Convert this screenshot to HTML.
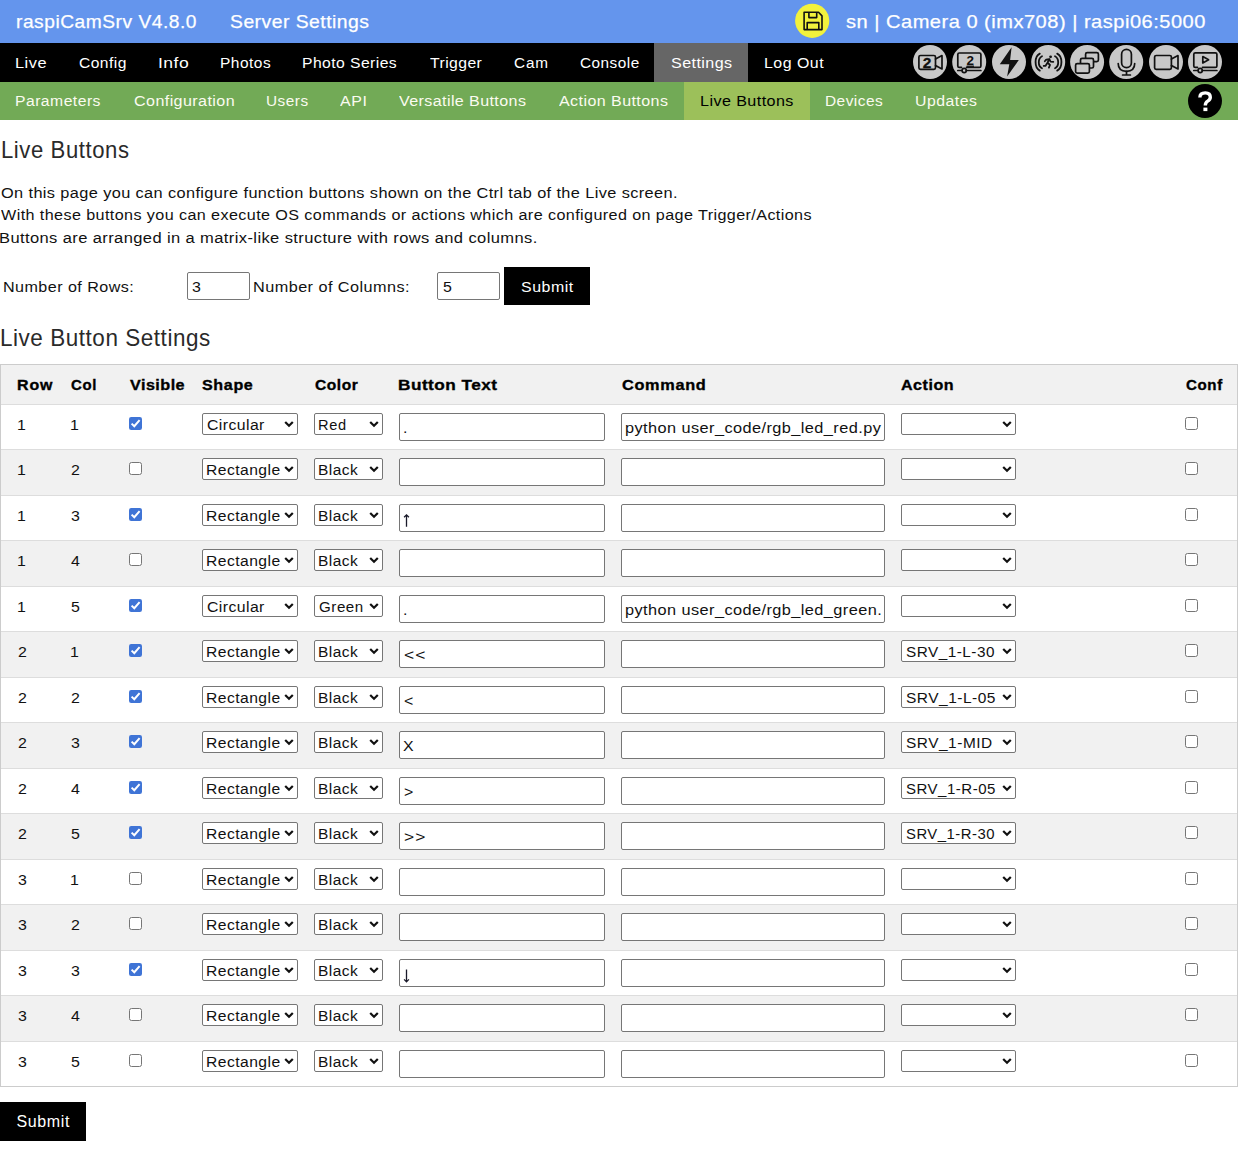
<!DOCTYPE html>
<html><head><meta charset="utf-8"><title>raspiCamSrv</title>
<style>
html,body{margin:0;padding:0;background:#fff;width:1238px;height:1157px;overflow:hidden;position:relative}
body{font-family:'Liberation Sans', sans-serif}
.b{position:absolute}
.t{position:absolute;white-space:nowrap;font-family:'Liberation Sans', sans-serif}
</style></head><body>
<div class=b style="left:0px;top:0px;width:1238px;height:43px;background:#6495ed"></div><div class=b style="left:0px;top:43px;width:1238px;height:39px;background:#000"></div><div class=b style="left:654px;top:43px;width:94px;height:39px;background:#666"></div><div class=b style="left:0px;top:82px;width:1238px;height:38px;background:#72aa56"></div><div class=b style="left:684px;top:82px;width:126px;height:38px;background:#9cc05a"></div><div class=b style="left:0px;top:364px;width:1238px;height:723px;border:1px solid #ccc;box-sizing:border-box;background:#fff"></div><div class=b style="left:1px;top:365px;width:1236px;height:39px;background:#f1f1f1"></div><div class=b style="left:1px;top:404px;width:1236px;height:1px;background:#ddd"></div><div class=b style="left:1px;top:449px;width:1236px;height:46px;background:#f1f1f1"></div><div class=b style="left:1px;top:449px;width:1236px;height:1px;background:#ddd"></div><div class=b style="left:1px;top:495px;width:1236px;height:1px;background:#ddd"></div><div class=b style="left:1px;top:540px;width:1236px;height:46px;background:#f1f1f1"></div><div class=b style="left:1px;top:540px;width:1236px;height:1px;background:#ddd"></div><div class=b style="left:1px;top:586px;width:1236px;height:1px;background:#ddd"></div><div class=b style="left:1px;top:631px;width:1236px;height:46px;background:#f1f1f1"></div><div class=b style="left:1px;top:631px;width:1236px;height:1px;background:#ddd"></div><div class=b style="left:1px;top:677px;width:1236px;height:1px;background:#ddd"></div><div class=b style="left:1px;top:722px;width:1236px;height:46px;background:#f1f1f1"></div><div class=b style="left:1px;top:722px;width:1236px;height:1px;background:#ddd"></div><div class=b style="left:1px;top:768px;width:1236px;height:1px;background:#ddd"></div><div class=b style="left:1px;top:813px;width:1236px;height:46px;background:#f1f1f1"></div><div class=b style="left:1px;top:813px;width:1236px;height:1px;background:#ddd"></div><div class=b style="left:1px;top:859px;width:1236px;height:1px;background:#ddd"></div><div class=b style="left:1px;top:904px;width:1236px;height:46px;background:#f1f1f1"></div><div class=b style="left:1px;top:904px;width:1236px;height:1px;background:#ddd"></div><div class=b style="left:1px;top:950px;width:1236px;height:1px;background:#ddd"></div><div class=b style="left:1px;top:995px;width:1236px;height:46px;background:#f1f1f1"></div><div class=b style="left:1px;top:995px;width:1236px;height:1px;background:#ddd"></div><div class=b style="left:1px;top:1041px;width:1236px;height:1px;background:#ddd"></div><div class=b style="left:187px;top:272.00px;width:63px;height:28px;border:1px solid #767676;border-radius:2px;box-sizing:border-box;background:#fff"></div><div class=b style="left:437px;top:272.00px;width:63px;height:28px;border:1px solid #767676;border-radius:2px;box-sizing:border-box;background:#fff"></div><div class=b style="left:504px;top:267px;width:86px;height:38px;background:#000"></div><div class=b style="left:0px;top:1102px;width:86px;height:39px;background:#000"></div><svg class=b style="left:129px;top:417.00px" width=13 height=13 viewBox="0 0 13 13"><rect x="0" y="0" width="13" height="13" rx="2.2" fill="#3f74d6"/><path d="M2.6 6.6 L5.3 9.2 L10.6 3.2" fill="none" stroke="#fff" stroke-width="2"/></svg><div class=b style="left:202px;top:413.00px;width:96px;height:22px;border:1px solid #767676;border-radius:2px;box-sizing:border-box;background:#fff"></div><svg class=b style="left:284px;top:419.50px;z-index:7" width="10" height="8" viewBox="0 0 10 8"><path d="M1.2 2 L5 5.8 L8.8 2" fill="none" stroke="#111" stroke-width="2.2"/></svg><div class=b style="left:314px;top:413.00px;width:69px;height:22px;border:1px solid #767676;border-radius:2px;box-sizing:border-box;background:#fff"></div><svg class=b style="left:368.7px;top:419.50px;z-index:7" width="10" height="8" viewBox="0 0 10 8"><path d="M1.2 2 L5 5.8 L8.8 2" fill="none" stroke="#111" stroke-width="2.2"/></svg><div class=b style="left:399px;top:413.00px;width:206px;height:28px;border:1px solid #767676;border-radius:2px;box-sizing:border-box;background:#fff"></div><div class=b style="left:621px;top:413.00px;width:264px;height:28px;border:1px solid #767676;border-radius:2px;box-sizing:border-box;background:#fff"></div><div class=b style="left:901px;top:413.00px;width:115px;height:22px;border:1px solid #767676;border-radius:2px;box-sizing:border-box;background:#fff"></div><svg class=b style="left:1002px;top:419.50px;z-index:7" width="10" height="8" viewBox="0 0 10 8"><path d="M1.2 2 L5 5.8 L8.8 2" fill="none" stroke="#111" stroke-width="2.2"/></svg><svg class=b style="left:1185px;top:417.00px" width=13 height=13 viewBox="0 0 13 13"><rect x="0.5" y="0.5" width="12" height="12" rx="2" fill="#fff" stroke="#767676" stroke-width="1"/></svg><svg class=b style="left:129px;top:462.00px" width=13 height=13 viewBox="0 0 13 13"><rect x="0.5" y="0.5" width="12" height="12" rx="2" fill="#fff" stroke="#767676" stroke-width="1"/></svg><div class=b style="left:202px;top:458.00px;width:96px;height:22px;border:1px solid #767676;border-radius:2px;box-sizing:border-box;background:#fff"></div><svg class=b style="left:284px;top:464.50px;z-index:7" width="10" height="8" viewBox="0 0 10 8"><path d="M1.2 2 L5 5.8 L8.8 2" fill="none" stroke="#111" stroke-width="2.2"/></svg><div class=b style="left:314px;top:458.00px;width:69px;height:22px;border:1px solid #767676;border-radius:2px;box-sizing:border-box;background:#fff"></div><svg class=b style="left:368.7px;top:464.50px;z-index:7" width="10" height="8" viewBox="0 0 10 8"><path d="M1.2 2 L5 5.8 L8.8 2" fill="none" stroke="#111" stroke-width="2.2"/></svg><div class=b style="left:399px;top:458.00px;width:206px;height:28px;border:1px solid #767676;border-radius:2px;box-sizing:border-box;background:#fff"></div><div class=b style="left:621px;top:458.00px;width:264px;height:28px;border:1px solid #767676;border-radius:2px;box-sizing:border-box;background:#fff"></div><div class=b style="left:901px;top:458.00px;width:115px;height:22px;border:1px solid #767676;border-radius:2px;box-sizing:border-box;background:#fff"></div><svg class=b style="left:1002px;top:464.50px;z-index:7" width="10" height="8" viewBox="0 0 10 8"><path d="M1.2 2 L5 5.8 L8.8 2" fill="none" stroke="#111" stroke-width="2.2"/></svg><svg class=b style="left:1185px;top:462.00px" width=13 height=13 viewBox="0 0 13 13"><rect x="0.5" y="0.5" width="12" height="12" rx="2" fill="#fff" stroke="#767676" stroke-width="1"/></svg><svg class=b style="left:129px;top:508.00px" width=13 height=13 viewBox="0 0 13 13"><rect x="0" y="0" width="13" height="13" rx="2.2" fill="#3f74d6"/><path d="M2.6 6.6 L5.3 9.2 L10.6 3.2" fill="none" stroke="#fff" stroke-width="2"/></svg><div class=b style="left:202px;top:504.00px;width:96px;height:22px;border:1px solid #767676;border-radius:2px;box-sizing:border-box;background:#fff"></div><svg class=b style="left:284px;top:510.50px;z-index:7" width="10" height="8" viewBox="0 0 10 8"><path d="M1.2 2 L5 5.8 L8.8 2" fill="none" stroke="#111" stroke-width="2.2"/></svg><div class=b style="left:314px;top:504.00px;width:69px;height:22px;border:1px solid #767676;border-radius:2px;box-sizing:border-box;background:#fff"></div><svg class=b style="left:368.7px;top:510.50px;z-index:7" width="10" height="8" viewBox="0 0 10 8"><path d="M1.2 2 L5 5.8 L8.8 2" fill="none" stroke="#111" stroke-width="2.2"/></svg><div class=b style="left:399px;top:504.00px;width:206px;height:28px;border:1px solid #767676;border-radius:2px;box-sizing:border-box;background:#fff"></div><div class=b style="left:621px;top:504.00px;width:264px;height:28px;border:1px solid #767676;border-radius:2px;box-sizing:border-box;background:#fff"></div><div class=b style="left:901px;top:504.00px;width:115px;height:22px;border:1px solid #767676;border-radius:2px;box-sizing:border-box;background:#fff"></div><svg class=b style="left:1002px;top:510.50px;z-index:7" width="10" height="8" viewBox="0 0 10 8"><path d="M1.2 2 L5 5.8 L8.8 2" fill="none" stroke="#111" stroke-width="2.2"/></svg><svg class=b style="left:1185px;top:508.00px" width=13 height=13 viewBox="0 0 13 13"><rect x="0.5" y="0.5" width="12" height="12" rx="2" fill="#fff" stroke="#767676" stroke-width="1"/></svg><svg class=b style="left:400px;top:512.00px;z-index:7" width="12" height="18" viewBox="0 0 12 18"><path d="M6.5 2.8 V14.8 M4.1 5.2 L6.5 2.8 L8.9 5.2" fill="none" stroke="#1a1a2a" stroke-width="1.3"/></svg><svg class=b style="left:129px;top:553.00px" width=13 height=13 viewBox="0 0 13 13"><rect x="0.5" y="0.5" width="12" height="12" rx="2" fill="#fff" stroke="#767676" stroke-width="1"/></svg><div class=b style="left:202px;top:549.00px;width:96px;height:22px;border:1px solid #767676;border-radius:2px;box-sizing:border-box;background:#fff"></div><svg class=b style="left:284px;top:555.50px;z-index:7" width="10" height="8" viewBox="0 0 10 8"><path d="M1.2 2 L5 5.8 L8.8 2" fill="none" stroke="#111" stroke-width="2.2"/></svg><div class=b style="left:314px;top:549.00px;width:69px;height:22px;border:1px solid #767676;border-radius:2px;box-sizing:border-box;background:#fff"></div><svg class=b style="left:368.7px;top:555.50px;z-index:7" width="10" height="8" viewBox="0 0 10 8"><path d="M1.2 2 L5 5.8 L8.8 2" fill="none" stroke="#111" stroke-width="2.2"/></svg><div class=b style="left:399px;top:549.00px;width:206px;height:28px;border:1px solid #767676;border-radius:2px;box-sizing:border-box;background:#fff"></div><div class=b style="left:621px;top:549.00px;width:264px;height:28px;border:1px solid #767676;border-radius:2px;box-sizing:border-box;background:#fff"></div><div class=b style="left:901px;top:549.00px;width:115px;height:22px;border:1px solid #767676;border-radius:2px;box-sizing:border-box;background:#fff"></div><svg class=b style="left:1002px;top:555.50px;z-index:7" width="10" height="8" viewBox="0 0 10 8"><path d="M1.2 2 L5 5.8 L8.8 2" fill="none" stroke="#111" stroke-width="2.2"/></svg><svg class=b style="left:1185px;top:553.00px" width=13 height=13 viewBox="0 0 13 13"><rect x="0.5" y="0.5" width="12" height="12" rx="2" fill="#fff" stroke="#767676" stroke-width="1"/></svg><svg class=b style="left:129px;top:599.00px" width=13 height=13 viewBox="0 0 13 13"><rect x="0" y="0" width="13" height="13" rx="2.2" fill="#3f74d6"/><path d="M2.6 6.6 L5.3 9.2 L10.6 3.2" fill="none" stroke="#fff" stroke-width="2"/></svg><div class=b style="left:202px;top:595.00px;width:96px;height:22px;border:1px solid #767676;border-radius:2px;box-sizing:border-box;background:#fff"></div><svg class=b style="left:284px;top:601.50px;z-index:7" width="10" height="8" viewBox="0 0 10 8"><path d="M1.2 2 L5 5.8 L8.8 2" fill="none" stroke="#111" stroke-width="2.2"/></svg><div class=b style="left:314px;top:595.00px;width:69px;height:22px;border:1px solid #767676;border-radius:2px;box-sizing:border-box;background:#fff"></div><svg class=b style="left:368.7px;top:601.50px;z-index:7" width="10" height="8" viewBox="0 0 10 8"><path d="M1.2 2 L5 5.8 L8.8 2" fill="none" stroke="#111" stroke-width="2.2"/></svg><div class=b style="left:399px;top:595.00px;width:206px;height:28px;border:1px solid #767676;border-radius:2px;box-sizing:border-box;background:#fff"></div><div class=b style="left:621px;top:595.00px;width:264px;height:28px;border:1px solid #767676;border-radius:2px;box-sizing:border-box;background:#fff"></div><div class=b style="left:901px;top:595.00px;width:115px;height:22px;border:1px solid #767676;border-radius:2px;box-sizing:border-box;background:#fff"></div><svg class=b style="left:1002px;top:601.50px;z-index:7" width="10" height="8" viewBox="0 0 10 8"><path d="M1.2 2 L5 5.8 L8.8 2" fill="none" stroke="#111" stroke-width="2.2"/></svg><svg class=b style="left:1185px;top:599.00px" width=13 height=13 viewBox="0 0 13 13"><rect x="0.5" y="0.5" width="12" height="12" rx="2" fill="#fff" stroke="#767676" stroke-width="1"/></svg><svg class=b style="left:129px;top:644.00px" width=13 height=13 viewBox="0 0 13 13"><rect x="0" y="0" width="13" height="13" rx="2.2" fill="#3f74d6"/><path d="M2.6 6.6 L5.3 9.2 L10.6 3.2" fill="none" stroke="#fff" stroke-width="2"/></svg><div class=b style="left:202px;top:640.00px;width:96px;height:22px;border:1px solid #767676;border-radius:2px;box-sizing:border-box;background:#fff"></div><svg class=b style="left:284px;top:646.50px;z-index:7" width="10" height="8" viewBox="0 0 10 8"><path d="M1.2 2 L5 5.8 L8.8 2" fill="none" stroke="#111" stroke-width="2.2"/></svg><div class=b style="left:314px;top:640.00px;width:69px;height:22px;border:1px solid #767676;border-radius:2px;box-sizing:border-box;background:#fff"></div><svg class=b style="left:368.7px;top:646.50px;z-index:7" width="10" height="8" viewBox="0 0 10 8"><path d="M1.2 2 L5 5.8 L8.8 2" fill="none" stroke="#111" stroke-width="2.2"/></svg><div class=b style="left:399px;top:640.00px;width:206px;height:28px;border:1px solid #767676;border-radius:2px;box-sizing:border-box;background:#fff"></div><div class=b style="left:621px;top:640.00px;width:264px;height:28px;border:1px solid #767676;border-radius:2px;box-sizing:border-box;background:#fff"></div><div class=b style="left:901px;top:640.00px;width:115px;height:22px;border:1px solid #767676;border-radius:2px;box-sizing:border-box;background:#fff"></div><svg class=b style="left:1002px;top:646.50px;z-index:7" width="10" height="8" viewBox="0 0 10 8"><path d="M1.2 2 L5 5.8 L8.8 2" fill="none" stroke="#111" stroke-width="2.2"/></svg><svg class=b style="left:1185px;top:644.00px" width=13 height=13 viewBox="0 0 13 13"><rect x="0.5" y="0.5" width="12" height="12" rx="2" fill="#fff" stroke="#767676" stroke-width="1"/></svg><svg class=b style="left:129px;top:690.00px" width=13 height=13 viewBox="0 0 13 13"><rect x="0" y="0" width="13" height="13" rx="2.2" fill="#3f74d6"/><path d="M2.6 6.6 L5.3 9.2 L10.6 3.2" fill="none" stroke="#fff" stroke-width="2"/></svg><div class=b style="left:202px;top:686.00px;width:96px;height:22px;border:1px solid #767676;border-radius:2px;box-sizing:border-box;background:#fff"></div><svg class=b style="left:284px;top:692.50px;z-index:7" width="10" height="8" viewBox="0 0 10 8"><path d="M1.2 2 L5 5.8 L8.8 2" fill="none" stroke="#111" stroke-width="2.2"/></svg><div class=b style="left:314px;top:686.00px;width:69px;height:22px;border:1px solid #767676;border-radius:2px;box-sizing:border-box;background:#fff"></div><svg class=b style="left:368.7px;top:692.50px;z-index:7" width="10" height="8" viewBox="0 0 10 8"><path d="M1.2 2 L5 5.8 L8.8 2" fill="none" stroke="#111" stroke-width="2.2"/></svg><div class=b style="left:399px;top:686.00px;width:206px;height:28px;border:1px solid #767676;border-radius:2px;box-sizing:border-box;background:#fff"></div><div class=b style="left:621px;top:686.00px;width:264px;height:28px;border:1px solid #767676;border-radius:2px;box-sizing:border-box;background:#fff"></div><div class=b style="left:901px;top:686.00px;width:115px;height:22px;border:1px solid #767676;border-radius:2px;box-sizing:border-box;background:#fff"></div><svg class=b style="left:1002px;top:692.50px;z-index:7" width="10" height="8" viewBox="0 0 10 8"><path d="M1.2 2 L5 5.8 L8.8 2" fill="none" stroke="#111" stroke-width="2.2"/></svg><svg class=b style="left:1185px;top:690.00px" width=13 height=13 viewBox="0 0 13 13"><rect x="0.5" y="0.5" width="12" height="12" rx="2" fill="#fff" stroke="#767676" stroke-width="1"/></svg><svg class=b style="left:129px;top:735.00px" width=13 height=13 viewBox="0 0 13 13"><rect x="0" y="0" width="13" height="13" rx="2.2" fill="#3f74d6"/><path d="M2.6 6.6 L5.3 9.2 L10.6 3.2" fill="none" stroke="#fff" stroke-width="2"/></svg><div class=b style="left:202px;top:731.00px;width:96px;height:22px;border:1px solid #767676;border-radius:2px;box-sizing:border-box;background:#fff"></div><svg class=b style="left:284px;top:737.50px;z-index:7" width="10" height="8" viewBox="0 0 10 8"><path d="M1.2 2 L5 5.8 L8.8 2" fill="none" stroke="#111" stroke-width="2.2"/></svg><div class=b style="left:314px;top:731.00px;width:69px;height:22px;border:1px solid #767676;border-radius:2px;box-sizing:border-box;background:#fff"></div><svg class=b style="left:368.7px;top:737.50px;z-index:7" width="10" height="8" viewBox="0 0 10 8"><path d="M1.2 2 L5 5.8 L8.8 2" fill="none" stroke="#111" stroke-width="2.2"/></svg><div class=b style="left:399px;top:731.00px;width:206px;height:28px;border:1px solid #767676;border-radius:2px;box-sizing:border-box;background:#fff"></div><div class=b style="left:621px;top:731.00px;width:264px;height:28px;border:1px solid #767676;border-radius:2px;box-sizing:border-box;background:#fff"></div><div class=b style="left:901px;top:731.00px;width:115px;height:22px;border:1px solid #767676;border-radius:2px;box-sizing:border-box;background:#fff"></div><svg class=b style="left:1002px;top:737.50px;z-index:7" width="10" height="8" viewBox="0 0 10 8"><path d="M1.2 2 L5 5.8 L8.8 2" fill="none" stroke="#111" stroke-width="2.2"/></svg><svg class=b style="left:1185px;top:735.00px" width=13 height=13 viewBox="0 0 13 13"><rect x="0.5" y="0.5" width="12" height="12" rx="2" fill="#fff" stroke="#767676" stroke-width="1"/></svg><svg class=b style="left:129px;top:781.00px" width=13 height=13 viewBox="0 0 13 13"><rect x="0" y="0" width="13" height="13" rx="2.2" fill="#3f74d6"/><path d="M2.6 6.6 L5.3 9.2 L10.6 3.2" fill="none" stroke="#fff" stroke-width="2"/></svg><div class=b style="left:202px;top:777.00px;width:96px;height:22px;border:1px solid #767676;border-radius:2px;box-sizing:border-box;background:#fff"></div><svg class=b style="left:284px;top:783.50px;z-index:7" width="10" height="8" viewBox="0 0 10 8"><path d="M1.2 2 L5 5.8 L8.8 2" fill="none" stroke="#111" stroke-width="2.2"/></svg><div class=b style="left:314px;top:777.00px;width:69px;height:22px;border:1px solid #767676;border-radius:2px;box-sizing:border-box;background:#fff"></div><svg class=b style="left:368.7px;top:783.50px;z-index:7" width="10" height="8" viewBox="0 0 10 8"><path d="M1.2 2 L5 5.8 L8.8 2" fill="none" stroke="#111" stroke-width="2.2"/></svg><div class=b style="left:399px;top:777.00px;width:206px;height:28px;border:1px solid #767676;border-radius:2px;box-sizing:border-box;background:#fff"></div><div class=b style="left:621px;top:777.00px;width:264px;height:28px;border:1px solid #767676;border-radius:2px;box-sizing:border-box;background:#fff"></div><div class=b style="left:901px;top:777.00px;width:115px;height:22px;border:1px solid #767676;border-radius:2px;box-sizing:border-box;background:#fff"></div><svg class=b style="left:1002px;top:783.50px;z-index:7" width="10" height="8" viewBox="0 0 10 8"><path d="M1.2 2 L5 5.8 L8.8 2" fill="none" stroke="#111" stroke-width="2.2"/></svg><svg class=b style="left:1185px;top:781.00px" width=13 height=13 viewBox="0 0 13 13"><rect x="0.5" y="0.5" width="12" height="12" rx="2" fill="#fff" stroke="#767676" stroke-width="1"/></svg><svg class=b style="left:129px;top:826.00px" width=13 height=13 viewBox="0 0 13 13"><rect x="0" y="0" width="13" height="13" rx="2.2" fill="#3f74d6"/><path d="M2.6 6.6 L5.3 9.2 L10.6 3.2" fill="none" stroke="#fff" stroke-width="2"/></svg><div class=b style="left:202px;top:822.00px;width:96px;height:22px;border:1px solid #767676;border-radius:2px;box-sizing:border-box;background:#fff"></div><svg class=b style="left:284px;top:828.50px;z-index:7" width="10" height="8" viewBox="0 0 10 8"><path d="M1.2 2 L5 5.8 L8.8 2" fill="none" stroke="#111" stroke-width="2.2"/></svg><div class=b style="left:314px;top:822.00px;width:69px;height:22px;border:1px solid #767676;border-radius:2px;box-sizing:border-box;background:#fff"></div><svg class=b style="left:368.7px;top:828.50px;z-index:7" width="10" height="8" viewBox="0 0 10 8"><path d="M1.2 2 L5 5.8 L8.8 2" fill="none" stroke="#111" stroke-width="2.2"/></svg><div class=b style="left:399px;top:822.00px;width:206px;height:28px;border:1px solid #767676;border-radius:2px;box-sizing:border-box;background:#fff"></div><div class=b style="left:621px;top:822.00px;width:264px;height:28px;border:1px solid #767676;border-radius:2px;box-sizing:border-box;background:#fff"></div><div class=b style="left:901px;top:822.00px;width:115px;height:22px;border:1px solid #767676;border-radius:2px;box-sizing:border-box;background:#fff"></div><svg class=b style="left:1002px;top:828.50px;z-index:7" width="10" height="8" viewBox="0 0 10 8"><path d="M1.2 2 L5 5.8 L8.8 2" fill="none" stroke="#111" stroke-width="2.2"/></svg><svg class=b style="left:1185px;top:826.00px" width=13 height=13 viewBox="0 0 13 13"><rect x="0.5" y="0.5" width="12" height="12" rx="2" fill="#fff" stroke="#767676" stroke-width="1"/></svg><svg class=b style="left:129px;top:872.00px" width=13 height=13 viewBox="0 0 13 13"><rect x="0.5" y="0.5" width="12" height="12" rx="2" fill="#fff" stroke="#767676" stroke-width="1"/></svg><div class=b style="left:202px;top:868.00px;width:96px;height:22px;border:1px solid #767676;border-radius:2px;box-sizing:border-box;background:#fff"></div><svg class=b style="left:284px;top:874.50px;z-index:7" width="10" height="8" viewBox="0 0 10 8"><path d="M1.2 2 L5 5.8 L8.8 2" fill="none" stroke="#111" stroke-width="2.2"/></svg><div class=b style="left:314px;top:868.00px;width:69px;height:22px;border:1px solid #767676;border-radius:2px;box-sizing:border-box;background:#fff"></div><svg class=b style="left:368.7px;top:874.50px;z-index:7" width="10" height="8" viewBox="0 0 10 8"><path d="M1.2 2 L5 5.8 L8.8 2" fill="none" stroke="#111" stroke-width="2.2"/></svg><div class=b style="left:399px;top:868.00px;width:206px;height:28px;border:1px solid #767676;border-radius:2px;box-sizing:border-box;background:#fff"></div><div class=b style="left:621px;top:868.00px;width:264px;height:28px;border:1px solid #767676;border-radius:2px;box-sizing:border-box;background:#fff"></div><div class=b style="left:901px;top:868.00px;width:115px;height:22px;border:1px solid #767676;border-radius:2px;box-sizing:border-box;background:#fff"></div><svg class=b style="left:1002px;top:874.50px;z-index:7" width="10" height="8" viewBox="0 0 10 8"><path d="M1.2 2 L5 5.8 L8.8 2" fill="none" stroke="#111" stroke-width="2.2"/></svg><svg class=b style="left:1185px;top:872.00px" width=13 height=13 viewBox="0 0 13 13"><rect x="0.5" y="0.5" width="12" height="12" rx="2" fill="#fff" stroke="#767676" stroke-width="1"/></svg><svg class=b style="left:129px;top:917.00px" width=13 height=13 viewBox="0 0 13 13"><rect x="0.5" y="0.5" width="12" height="12" rx="2" fill="#fff" stroke="#767676" stroke-width="1"/></svg><div class=b style="left:202px;top:913.00px;width:96px;height:22px;border:1px solid #767676;border-radius:2px;box-sizing:border-box;background:#fff"></div><svg class=b style="left:284px;top:919.50px;z-index:7" width="10" height="8" viewBox="0 0 10 8"><path d="M1.2 2 L5 5.8 L8.8 2" fill="none" stroke="#111" stroke-width="2.2"/></svg><div class=b style="left:314px;top:913.00px;width:69px;height:22px;border:1px solid #767676;border-radius:2px;box-sizing:border-box;background:#fff"></div><svg class=b style="left:368.7px;top:919.50px;z-index:7" width="10" height="8" viewBox="0 0 10 8"><path d="M1.2 2 L5 5.8 L8.8 2" fill="none" stroke="#111" stroke-width="2.2"/></svg><div class=b style="left:399px;top:913.00px;width:206px;height:28px;border:1px solid #767676;border-radius:2px;box-sizing:border-box;background:#fff"></div><div class=b style="left:621px;top:913.00px;width:264px;height:28px;border:1px solid #767676;border-radius:2px;box-sizing:border-box;background:#fff"></div><div class=b style="left:901px;top:913.00px;width:115px;height:22px;border:1px solid #767676;border-radius:2px;box-sizing:border-box;background:#fff"></div><svg class=b style="left:1002px;top:919.50px;z-index:7" width="10" height="8" viewBox="0 0 10 8"><path d="M1.2 2 L5 5.8 L8.8 2" fill="none" stroke="#111" stroke-width="2.2"/></svg><svg class=b style="left:1185px;top:917.00px" width=13 height=13 viewBox="0 0 13 13"><rect x="0.5" y="0.5" width="12" height="12" rx="2" fill="#fff" stroke="#767676" stroke-width="1"/></svg><svg class=b style="left:129px;top:963.00px" width=13 height=13 viewBox="0 0 13 13"><rect x="0" y="0" width="13" height="13" rx="2.2" fill="#3f74d6"/><path d="M2.6 6.6 L5.3 9.2 L10.6 3.2" fill="none" stroke="#fff" stroke-width="2"/></svg><div class=b style="left:202px;top:959.00px;width:96px;height:22px;border:1px solid #767676;border-radius:2px;box-sizing:border-box;background:#fff"></div><svg class=b style="left:284px;top:965.50px;z-index:7" width="10" height="8" viewBox="0 0 10 8"><path d="M1.2 2 L5 5.8 L8.8 2" fill="none" stroke="#111" stroke-width="2.2"/></svg><div class=b style="left:314px;top:959.00px;width:69px;height:22px;border:1px solid #767676;border-radius:2px;box-sizing:border-box;background:#fff"></div><svg class=b style="left:368.7px;top:965.50px;z-index:7" width="10" height="8" viewBox="0 0 10 8"><path d="M1.2 2 L5 5.8 L8.8 2" fill="none" stroke="#111" stroke-width="2.2"/></svg><div class=b style="left:399px;top:959.00px;width:206px;height:28px;border:1px solid #767676;border-radius:2px;box-sizing:border-box;background:#fff"></div><div class=b style="left:621px;top:959.00px;width:264px;height:28px;border:1px solid #767676;border-radius:2px;box-sizing:border-box;background:#fff"></div><div class=b style="left:901px;top:959.00px;width:115px;height:22px;border:1px solid #767676;border-radius:2px;box-sizing:border-box;background:#fff"></div><svg class=b style="left:1002px;top:965.50px;z-index:7" width="10" height="8" viewBox="0 0 10 8"><path d="M1.2 2 L5 5.8 L8.8 2" fill="none" stroke="#111" stroke-width="2.2"/></svg><svg class=b style="left:1185px;top:963.00px" width=13 height=13 viewBox="0 0 13 13"><rect x="0.5" y="0.5" width="12" height="12" rx="2" fill="#fff" stroke="#767676" stroke-width="1"/></svg><svg class=b style="left:400px;top:967.00px;z-index:7" width="12" height="18" viewBox="0 0 12 18"><path d="M6.5 2.4 V14.9 M4.1 12.4 L6.5 14.9 L8.9 12.4" fill="none" stroke="#1a1a2a" stroke-width="1.3"/></svg><svg class=b style="left:129px;top:1008.00px" width=13 height=13 viewBox="0 0 13 13"><rect x="0.5" y="0.5" width="12" height="12" rx="2" fill="#fff" stroke="#767676" stroke-width="1"/></svg><div class=b style="left:202px;top:1004.00px;width:96px;height:22px;border:1px solid #767676;border-radius:2px;box-sizing:border-box;background:#fff"></div><svg class=b style="left:284px;top:1010.50px;z-index:7" width="10" height="8" viewBox="0 0 10 8"><path d="M1.2 2 L5 5.8 L8.8 2" fill="none" stroke="#111" stroke-width="2.2"/></svg><div class=b style="left:314px;top:1004.00px;width:69px;height:22px;border:1px solid #767676;border-radius:2px;box-sizing:border-box;background:#fff"></div><svg class=b style="left:368.7px;top:1010.50px;z-index:7" width="10" height="8" viewBox="0 0 10 8"><path d="M1.2 2 L5 5.8 L8.8 2" fill="none" stroke="#111" stroke-width="2.2"/></svg><div class=b style="left:399px;top:1004.00px;width:206px;height:28px;border:1px solid #767676;border-radius:2px;box-sizing:border-box;background:#fff"></div><div class=b style="left:621px;top:1004.00px;width:264px;height:28px;border:1px solid #767676;border-radius:2px;box-sizing:border-box;background:#fff"></div><div class=b style="left:901px;top:1004.00px;width:115px;height:22px;border:1px solid #767676;border-radius:2px;box-sizing:border-box;background:#fff"></div><svg class=b style="left:1002px;top:1010.50px;z-index:7" width="10" height="8" viewBox="0 0 10 8"><path d="M1.2 2 L5 5.8 L8.8 2" fill="none" stroke="#111" stroke-width="2.2"/></svg><svg class=b style="left:1185px;top:1008.00px" width=13 height=13 viewBox="0 0 13 13"><rect x="0.5" y="0.5" width="12" height="12" rx="2" fill="#fff" stroke="#767676" stroke-width="1"/></svg><svg class=b style="left:129px;top:1054.00px" width=13 height=13 viewBox="0 0 13 13"><rect x="0.5" y="0.5" width="12" height="12" rx="2" fill="#fff" stroke="#767676" stroke-width="1"/></svg><div class=b style="left:202px;top:1050.00px;width:96px;height:22px;border:1px solid #767676;border-radius:2px;box-sizing:border-box;background:#fff"></div><svg class=b style="left:284px;top:1056.50px;z-index:7" width="10" height="8" viewBox="0 0 10 8"><path d="M1.2 2 L5 5.8 L8.8 2" fill="none" stroke="#111" stroke-width="2.2"/></svg><div class=b style="left:314px;top:1050.00px;width:69px;height:22px;border:1px solid #767676;border-radius:2px;box-sizing:border-box;background:#fff"></div><svg class=b style="left:368.7px;top:1056.50px;z-index:7" width="10" height="8" viewBox="0 0 10 8"><path d="M1.2 2 L5 5.8 L8.8 2" fill="none" stroke="#111" stroke-width="2.2"/></svg><div class=b style="left:399px;top:1050.00px;width:206px;height:28px;border:1px solid #767676;border-radius:2px;box-sizing:border-box;background:#fff"></div><div class=b style="left:621px;top:1050.00px;width:264px;height:28px;border:1px solid #767676;border-radius:2px;box-sizing:border-box;background:#fff"></div><div class=b style="left:901px;top:1050.00px;width:115px;height:22px;border:1px solid #767676;border-radius:2px;box-sizing:border-box;background:#fff"></div><svg class=b style="left:1002px;top:1056.50px;z-index:7" width="10" height="8" viewBox="0 0 10 8"><path d="M1.2 2 L5 5.8 L8.8 2" fill="none" stroke="#111" stroke-width="2.2"/></svg><svg class=b style="left:1185px;top:1054.00px" width=13 height=13 viewBox="0 0 13 13"><rect x="0.5" y="0.5" width="12" height="12" rx="2" fill="#fff" stroke="#767676" stroke-width="1"/></svg>
<svg class="b" style="left:0;top:0;z-index:4" width="1238" height="120" viewBox="0 0 1238 120">
<!-- save -->
<circle cx="812.2" cy="20.8" r="17.1" fill="#f2f23c"/>
<g fill="none" stroke="#111" stroke-width="1.6" stroke-linejoin="round">
<path d="M804.1 12.3 H818.5 L822 15.9 V29.6 H804.1 Z"/>
<path d="M808.9 12.3 V17.6 H816.7 V12.3"/>
<path d="M807.2 29.6 V22.6 H818.8 V29.6"/>
</g>
<!-- nav circles -->
<g fill="#c8c8c8">
<circle cx="930" cy="62" r="17"/><circle cx="969.2" cy="62" r="17"/><circle cx="1009" cy="62" r="17"/><circle cx="1048.2" cy="62" r="17"/>
<circle cx="1087.1" cy="62" r="17"/><circle cx="1126.2" cy="62" r="17"/><circle cx="1166" cy="62" r="17"/><circle cx="1205" cy="62" r="17"/>
</g>
<g fill="none" stroke="#111" stroke-width="1.7" stroke-linejoin="round" stroke-linecap="round">
<!-- 1 camera 2 -->
<rect x="918.9" y="55.5" width="16.6" height="13.8" rx="1.6"/>
<path d="M935.5 59 L942 55.6 V69 L935.5 65.6"/>
<!-- 2 monitor 2 -->
<path d="M961.5 67.4 H959.3 Q957.8 67.4 957.8 65.9 V54.5 Q957.8 53 959.3 53 H979.4 Q980.9 53 980.9 54.5 V65.9 Q980.9 67.4 979.4 67.4 H966.5"/>
<path d="M957.8 70.5 H962 M966.3 70.5 H980.9"/>
<circle cx="964.2" cy="70.5" r="2.1"/>
<!-- 4 motion arcs -->
<path d="M1039.8 53.6 A6.3 9 0 0 0 1039.8 70.6" stroke-width="1.8"/>
<path d="M1042 56.2 A5.2 6.5 0 0 0 1042 68.2" stroke-width="1.8"/>
<path d="M1057.2 53.6 A6.3 9 0 0 1 1057.2 70.6" stroke-width="1.8"/>
<path d="M1055 56.2 A5.2 6.5 0 0 1 1055 68.2" stroke-width="1.8"/>
<!-- 5 stacked -->
<rect x="1085.6" y="52.6" width="12.8" height="9" rx="1.6" fill="#c8c8c8"/>
<rect x="1080.5" y="58.4" width="13" height="9.6" rx="1.6" fill="#c8c8c8"/>
<rect x="1075.6" y="63.6" width="13.8" height="9.6" rx="1.6" fill="#c8c8c8"/>
<!-- 6 mic -->
<rect x="1121.6" y="49.3" width="9.8" height="18.4" rx="4.9"/>
<path d="M1118.2 63.6 Q1118.2 71.3 1126.5 71.3 Q1134.7 71.3 1134.7 63.6"/>
<path d="M1126.5 71.3 V75 M1122.6 75 H1130.4"/>
<!-- 7 video -->
<rect x="1154.6" y="55.5" width="16.8" height="13.8" rx="1.6"/>
<path d="M1171.4 59 L1178 55.6 V69 L1171.4 65.6"/>
<!-- 8 monitor play -->
<path d="M1197.5 67.4 H1195.3 Q1193.8 67.4 1193.8 65.9 V54.3 Q1193.8 52.8 1195.3 52.8 H1215.4 Q1216.9 52.8 1216.9 54.3 V65.9 Q1216.9 67.4 1215.4 67.4 H1202.5"/>
<path d="M1193.8 70.5 H1198 M1202.3 70.5 H1216.9"/>
<circle cx="1200.2" cy="70.5" r="2.1"/>
<path d="M1202.8 56.6 V63 L1208.6 59.8 Z"/>
</g>
<!-- digits 2 -->
<text x="927.1" y="68" font-family="Liberation Sans" font-weight="bold" font-size="15.5" text-anchor="middle" fill="#111" stroke="#111" stroke-width="0.3">2</text>
<text x="970.2" y="65.2" font-family="Liberation Sans" font-weight="bold" font-size="13.5" text-anchor="middle" fill="#111">2</text>
<path d="M966.6 66.2 H974" stroke="#111" stroke-width="1.3"/>
<!-- bolt -->
<path d="M1011.6 47.2 L999.8 64.3 H1009.3 L1007.1 76.5 L1018.8 60 H1010.1 Z" fill="#111"/>
<!-- runner -->
<g fill="#111" stroke="#111" stroke-linecap="round" stroke-linejoin="round">
<circle cx="1050.6" cy="56.8" r="1.4" stroke="none"/>
<path d="M1049.3 59.2 L1047 63.6 M1049.3 59.2 L1046.2 59.6 L1044.8 61.3 M1049.3 59.2 L1050.6 61.6 L1053.3 61.9 M1047.6 62.6 L1050 65 L1048.9 67.6 M1047 63.6 L1045.6 65.8 L1043.7 65.9" fill="none" stroke-width="1.8"/>
</g>
<!-- help -->
<circle cx="1205" cy="101" r="17" fill="#000"/>
<path d="M1199.9 97.4 Q1199.9 92.9 1205.3 92.9 Q1210.3 92.9 1210.3 97.2 Q1210.3 99.6 1207.7 101.1 Q1205.3 102.5 1205.3 105.6" fill="none" stroke="#fff" stroke-width="3.4"/>
<rect x="1203.4" y="107.6" width="4.0" height="3.5" fill="#fff"/>
</svg>

<div class=t style="left:15.95px;top:10.38px;transform:scaleX(1.0539);transform-origin:0 0;font-size:18.2px;line-height:24px;letter-spacing:0.500px;font-weight:normal;color:#fff;z-index:5;-webkit-text-stroke:0.25px #fff">raspiCamSrv V4.8.0</div><div class=t style="left:229.90px;top:10.38px;transform:scaleX(1.0621);transform-origin:0 0;font-size:18.2px;line-height:24px;letter-spacing:0.467px;font-weight:normal;color:#fff;z-index:5;-webkit-text-stroke:0.25px #fff">Server Settings</div><div class=t style="left:845.80px;top:10.38px;transform:scaleX(1.1023);transform-origin:0 0;font-size:18.2px;line-height:24px;letter-spacing:0.453px;font-weight:normal;color:#fff;z-index:5;-webkit-text-stroke:0.25px #fff">sn | Camera 0 (imx708) | raspi06:5000</div><div class=t style="left:15.24px;top:52.88px;transform:scaleX(1.0558);transform-origin:0 0;font-size:15.5px;line-height:20px;letter-spacing:0.470px;font-weight:normal;color:#fff;z-index:5;-webkit-text-stroke:0px #fff">Live</div><div class=t style="left:78.70px;top:52.88px;transform:scaleX(1.0062);transform-origin:0 0;font-size:15.5px;line-height:20px;letter-spacing:0.465px;font-weight:normal;color:#fff;z-index:5;-webkit-text-stroke:0px #fff">Config</div><div class=t style="left:157.57px;top:52.88px;transform:scaleX(1.1330);transform-origin:0 0;font-size:15.5px;line-height:20px;letter-spacing:0.425px;font-weight:normal;color:#fff;z-index:5;-webkit-text-stroke:0px #fff">Info</div><div class=t style="left:219.50px;top:52.88px;transform:scaleX(0.9979);transform-origin:0 0;font-size:15.5px;line-height:20px;letter-spacing:0.500px;font-weight:normal;color:#fff;z-index:5;-webkit-text-stroke:0px #fff">Photos</div><div class=t style="left:301.99px;top:52.88px;transform:scaleX(1.0137);transform-origin:0 0;font-size:15.5px;line-height:20px;letter-spacing:0.421px;font-weight:normal;color:#fff;z-index:5;-webkit-text-stroke:0px #fff">Photo Series</div><div class=t style="left:429.50px;top:52.88px;transform:scaleX(1.0156);transform-origin:0 0;font-size:15.5px;line-height:20px;letter-spacing:0.424px;font-weight:normal;color:#fff;z-index:5;-webkit-text-stroke:0px #fff">Trigger</div><div class=t style="left:513.50px;top:52.88px;transform:scaleX(0.9884);transform-origin:0 0;font-size:15.5px;line-height:20px;letter-spacing:0.837px;font-weight:normal;color:#fff;z-index:5;-webkit-text-stroke:0px #fff">Cam</div><div class=t style="left:579.70px;top:52.88px;transform:scaleX(0.9897);transform-origin:0 0;font-size:15.5px;line-height:20px;letter-spacing:0.493px;font-weight:normal;color:#fff;z-index:5;-webkit-text-stroke:0px #fff">Console</div><div class=t style="left:670.60px;top:52.88px;transform:scaleX(1.0369);transform-origin:0 0;font-size:15.5px;line-height:20px;letter-spacing:0.423px;font-weight:normal;color:#fff;z-index:5;-webkit-text-stroke:0px #fff">Settings</div><div class=t style="left:763.67px;top:52.88px;transform:scaleX(1.0272);transform-origin:0 0;font-size:15.5px;line-height:20px;letter-spacing:0.481px;font-weight:normal;color:#fff;z-index:5;-webkit-text-stroke:0px #fff">Log Out</div><div class=t style="left:15.29px;top:91.38px;transform:scaleX(1.0139);transform-origin:0 0;font-size:15.5px;line-height:20px;letter-spacing:0.464px;font-weight:normal;color:#fbfbf0;z-index:5;-webkit-text-stroke:0px #fbfbf0">Parameters</div><div class=t style="left:134.00px;top:91.38px;transform:scaleX(1.0374);transform-origin:0 0;font-size:15.5px;line-height:20px;letter-spacing:0.402px;font-weight:normal;color:#fbfbf0;z-index:5;-webkit-text-stroke:0px #fbfbf0">Configuration</div><div class=t style="left:265.61px;top:91.38px;transform:scaleX(0.9900);transform-origin:0 0;font-size:15.5px;line-height:20px;letter-spacing:0.523px;font-weight:normal;color:#fbfbf0;z-index:5;-webkit-text-stroke:0px #fbfbf0">Users</div><div class=t style="left:340.00px;top:91.38px;transform:scaleX(1.0312);transform-origin:0 0;font-size:15.5px;line-height:20px;letter-spacing:0.623px;font-weight:normal;color:#fbfbf0;z-index:5;-webkit-text-stroke:0px #fbfbf0">API</div><div class=t style="left:398.50px;top:91.38px;transform:scaleX(1.0366);transform-origin:0 0;font-size:15.5px;line-height:20px;letter-spacing:0.383px;font-weight:normal;color:#fbfbf0;z-index:5;-webkit-text-stroke:0px #fbfbf0">Versatile Buttons</div><div class=t style="left:558.80px;top:91.38px;transform:scaleX(1.0354);transform-origin:0 0;font-size:15.5px;line-height:20px;letter-spacing:0.406px;font-weight:normal;color:#fbfbf0;z-index:5;-webkit-text-stroke:0px #fbfbf0">Action Buttons</div><div class=t style="left:699.96px;top:91.38px;transform:scaleX(1.0404);transform-origin:0 0;font-size:15.5px;line-height:20px;letter-spacing:0.405px;font-weight:normal;color:#000;z-index:5;-webkit-text-stroke:0px #000">Live Buttons</div><div class=t style="left:824.70px;top:91.38px;transform:scaleX(0.9958);transform-origin:0 0;font-size:15.5px;line-height:20px;letter-spacing:0.477px;font-weight:normal;color:#fbfbf0;z-index:5;-webkit-text-stroke:0px #fbfbf0">Devices</div><div class=t style="left:914.78px;top:91.38px;transform:scaleX(1.0203);transform-origin:0 0;font-size:15.5px;line-height:20px;letter-spacing:0.500px;font-weight:normal;color:#fbfbf0;z-index:5;-webkit-text-stroke:0px #fbfbf0">Updates</div><div class=t style="left:0.85px;top:135.23px;transform:scaleX(0.9536);transform-origin:0 0;font-size:23.2px;line-height:30px;letter-spacing:0.603px;font-weight:normal;color:#2a2a2a;z-index:5;-webkit-text-stroke:0px #2a2a2a">Live Buttons</div><div class=t style="left:0.50px;top:182.58px;transform:scaleX(1.0536);transform-origin:0 0;font-size:15.5px;line-height:20px;letter-spacing:0.364px;font-weight:normal;color:#111;z-index:5;-webkit-text-stroke:0px #111">On this page you can configure function buttons shown on the Ctrl tab of the Live screen.</div><div class=t style="left:0.50px;top:205.18px;transform:scaleX(1.0417);transform-origin:0 0;font-size:15.5px;line-height:20px;letter-spacing:0.385px;font-weight:normal;color:#111;z-index:5;-webkit-text-stroke:0px #111">With these buttons you can execute OS commands or actions which are configured on page Trigger/Actions</div><div class=t style="left:-0.57px;top:227.58px;transform:scaleX(1.0659);transform-origin:0 0;font-size:15.5px;line-height:20px;letter-spacing:0.364px;font-weight:normal;color:#111;z-index:5;-webkit-text-stroke:0px #111">Buttons are arranged in a matrix-like structure with rows and columns.</div><div class=t style="left:2.86px;top:276.88px;transform:scaleX(1.0388);transform-origin:0 0;font-size:15.5px;line-height:20px;letter-spacing:0.441px;font-weight:normal;color:#111;z-index:5;-webkit-text-stroke:0px #111">Number of Rows:</div><div class=t style="left:253.45px;top:276.88px;transform:scaleX(1.0476);transform-origin:0 0;font-size:15.5px;line-height:20px;letter-spacing:0.433px;font-weight:normal;color:#111;z-index:5;-webkit-text-stroke:0px #111">Number of Columns:</div><div class=t style="left:191.50px;top:277.38px;transform:scaleX(1.0260);transform-origin:0 0;font-size:15.5px;line-height:20px;letter-spacing:0.000px;font-weight:normal;color:#111;z-index:5;-webkit-text-stroke:0px #111">3</div><div class=t style="left:442.70px;top:277.38px;transform:scaleX(1.0260);transform-origin:0 0;font-size:15.5px;line-height:20px;letter-spacing:0.000px;font-weight:normal;color:#111;z-index:5;-webkit-text-stroke:0px #111">5</div><div class=t style="left:520.60px;top:276.88px;transform:scaleX(1.0270);transform-origin:0 0;font-size:15.5px;line-height:20px;letter-spacing:0.515px;font-weight:normal;color:#fff;z-index:5;-webkit-text-stroke:0px #fff">Submit</div><div class=t style="left:0.33px;top:323.33px;transform:scaleX(0.9688);transform-origin:0 0;font-size:23.2px;line-height:30px;letter-spacing:0.567px;font-weight:normal;color:#2a2a2a;z-index:5;-webkit-text-stroke:0px #2a2a2a">Live Button Settings</div><div class=t style="left:16.57px;top:374.58px;transform:scaleX(1.0296);transform-origin:0 0;font-size:15.5px;line-height:20px;letter-spacing:0.860px;font-weight:bold;color:#000;z-index:5;-webkit-text-stroke:0.35px #000">Row</div><div class=t style="left:71.00px;top:374.58px;transform:scaleX(0.9630);transform-origin:0 0;font-size:15.5px;line-height:20px;letter-spacing:0.649px;font-weight:bold;color:#000;z-index:5;-webkit-text-stroke:0.35px #000">Col</div><div class=t style="left:130.00px;top:374.58px;transform:scaleX(1.0436);transform-origin:0 0;font-size:15.5px;line-height:20px;letter-spacing:0.439px;font-weight:bold;color:#000;z-index:5;-webkit-text-stroke:0.35px #000">Visible</div><div class=t style="left:201.60px;top:374.58px;transform:scaleX(1.0372);transform-origin:0 0;font-size:15.5px;line-height:20px;letter-spacing:0.617px;font-weight:bold;color:#000;z-index:5;-webkit-text-stroke:0.35px #000">Shape</div><div class=t style="left:314.50px;top:374.58px;transform:scaleX(1.0032);transform-origin:0 0;font-size:15.5px;line-height:20px;letter-spacing:0.532px;font-weight:bold;color:#000;z-index:5;-webkit-text-stroke:0.35px #000">Color</div><div class=t style="left:398.09px;top:374.58px;transform:scaleX(1.1089);transform-origin:0 0;font-size:15.5px;line-height:20px;letter-spacing:0.441px;font-weight:bold;color:#000;z-index:5;-webkit-text-stroke:0.35px #000">Button Text</div><div class=t style="left:621.70px;top:374.58px;transform:scaleX(1.0507);transform-origin:0 0;font-size:15.5px;line-height:20px;letter-spacing:0.661px;font-weight:bold;color:#000;z-index:5;-webkit-text-stroke:0.35px #000">Command</div><div class=t style="left:901.10px;top:374.58px;transform:scaleX(1.0365);transform-origin:0 0;font-size:15.5px;line-height:20px;letter-spacing:0.503px;font-weight:bold;color:#000;z-index:5;-webkit-text-stroke:0.35px #000">Action</div><div class=t style="left:1185.70px;top:374.58px;transform:scaleX(0.9729);transform-origin:0 0;font-size:15.5px;line-height:20px;letter-spacing:0.634px;font-weight:bold;color:#000;z-index:5;-webkit-text-stroke:0.35px #000">Conf</div><div class=t style="left:16.97px;top:414.88px;transform:scaleX(1.0260);transform-origin:0 0;font-size:15.5px;line-height:20px;letter-spacing:0.000px;font-weight:normal;color:#111;z-index:5;-webkit-text-stroke:0px #111">1</div><div class=t style="left:70.27px;top:414.88px;transform:scaleX(1.0260);transform-origin:0 0;font-size:15.5px;line-height:20px;letter-spacing:0.000px;font-weight:normal;color:#111;z-index:5;-webkit-text-stroke:0px #111">1</div><div class=t style="left:207.30px;top:414.88px;transform:scaleX(1.0208);transform-origin:0 0;font-size:15.5px;line-height:20px;letter-spacing:0.400px;font-weight:normal;color:#111;z-index:5;-webkit-text-stroke:0px #111">Circular</div><div class=t style="left:318.46px;top:414.88px;transform:scaleX(0.9424);transform-origin:0 0;font-size:15.5px;line-height:20px;letter-spacing:0.706px;font-weight:normal;color:#111;z-index:5;-webkit-text-stroke:0px #111">Red</div><div class=t style="left:402.97px;top:417.68px;transform:scaleX(1.0260);transform-origin:0 0;font-size:15.5px;line-height:20px;letter-spacing:0.000px;font-weight:normal;color:#111;z-index:5;-webkit-text-stroke:0px #111">.</div><div class=b style="left:622.5px;top:414.30px;width:259.70000000000005px;height:25.70px;overflow:hidden;z-index:6"><div class=t style="left:2.45px;top:3.38px;transform:scaleX(1.0524);transform-origin:0 0;font-size:15.5px;line-height:20px;letter-spacing:0.404px;font-weight:normal;color:#111;z-index:6;-webkit-text-stroke:0px #111">python user_code/rgb_led_red.py</div></div><div class=t style="left:16.97px;top:459.88px;transform:scaleX(1.0260);transform-origin:0 0;font-size:15.5px;line-height:20px;letter-spacing:0.000px;font-weight:normal;color:#111;z-index:5;-webkit-text-stroke:0px #111">1</div><div class=t style="left:71.30px;top:459.88px;transform:scaleX(1.0260);transform-origin:0 0;font-size:15.5px;line-height:20px;letter-spacing:0.000px;font-weight:normal;color:#111;z-index:5;-webkit-text-stroke:0px #111">2</div><div class=t style="left:206.29px;top:459.88px;transform:scaleX(1.0103);transform-origin:0 0;font-size:15.5px;line-height:20px;letter-spacing:0.449px;font-weight:normal;color:#111;z-index:5;-webkit-text-stroke:0px #111">Rectangle</div><div class=t style="left:318.40px;top:459.88px;transform:scaleX(0.9998);transform-origin:0 0;font-size:15.5px;line-height:20px;letter-spacing:0.489px;font-weight:normal;color:#111;z-index:5;-webkit-text-stroke:0px #111">Black</div><div class=t style="left:16.97px;top:505.88px;transform:scaleX(1.0260);transform-origin:0 0;font-size:15.5px;line-height:20px;letter-spacing:0.000px;font-weight:normal;color:#111;z-index:5;-webkit-text-stroke:0px #111">1</div><div class=t style="left:71.30px;top:505.88px;transform:scaleX(1.0260);transform-origin:0 0;font-size:15.5px;line-height:20px;letter-spacing:0.000px;font-weight:normal;color:#111;z-index:5;-webkit-text-stroke:0px #111">3</div><div class=t style="left:206.29px;top:505.88px;transform:scaleX(1.0103);transform-origin:0 0;font-size:15.5px;line-height:20px;letter-spacing:0.449px;font-weight:normal;color:#111;z-index:5;-webkit-text-stroke:0px #111">Rectangle</div><div class=t style="left:318.40px;top:505.88px;transform:scaleX(0.9998);transform-origin:0 0;font-size:15.5px;line-height:20px;letter-spacing:0.489px;font-weight:normal;color:#111;z-index:5;-webkit-text-stroke:0px #111">Black</div><div class=t style="left:16.97px;top:550.88px;transform:scaleX(1.0260);transform-origin:0 0;font-size:15.5px;line-height:20px;letter-spacing:0.000px;font-weight:normal;color:#111;z-index:5;-webkit-text-stroke:0px #111">1</div><div class=t style="left:71.30px;top:550.88px;transform:scaleX(1.0260);transform-origin:0 0;font-size:15.5px;line-height:20px;letter-spacing:0.000px;font-weight:normal;color:#111;z-index:5;-webkit-text-stroke:0px #111">4</div><div class=t style="left:206.29px;top:550.88px;transform:scaleX(1.0103);transform-origin:0 0;font-size:15.5px;line-height:20px;letter-spacing:0.449px;font-weight:normal;color:#111;z-index:5;-webkit-text-stroke:0px #111">Rectangle</div><div class=t style="left:318.40px;top:550.88px;transform:scaleX(0.9998);transform-origin:0 0;font-size:15.5px;line-height:20px;letter-spacing:0.489px;font-weight:normal;color:#111;z-index:5;-webkit-text-stroke:0px #111">Black</div><div class=t style="left:16.97px;top:596.88px;transform:scaleX(1.0260);transform-origin:0 0;font-size:15.5px;line-height:20px;letter-spacing:0.000px;font-weight:normal;color:#111;z-index:5;-webkit-text-stroke:0px #111">1</div><div class=t style="left:71.30px;top:596.88px;transform:scaleX(1.0260);transform-origin:0 0;font-size:15.5px;line-height:20px;letter-spacing:0.000px;font-weight:normal;color:#111;z-index:5;-webkit-text-stroke:0px #111">5</div><div class=t style="left:207.30px;top:596.88px;transform:scaleX(1.0208);transform-origin:0 0;font-size:15.5px;line-height:20px;letter-spacing:0.400px;font-weight:normal;color:#111;z-index:5;-webkit-text-stroke:0px #111">Circular</div><div class=t style="left:319.40px;top:596.88px;transform:scaleX(0.9755);transform-origin:0 0;font-size:15.5px;line-height:20px;letter-spacing:0.559px;font-weight:normal;color:#111;z-index:5;-webkit-text-stroke:0px #111">Green</div><div class=t style="left:402.97px;top:599.68px;transform:scaleX(1.0260);transform-origin:0 0;font-size:15.5px;line-height:20px;letter-spacing:0.000px;font-weight:normal;color:#111;z-index:5;-webkit-text-stroke:0px #111">.</div><div class=b style="left:622.5px;top:596.30px;width:259.70000000000005px;height:25.70px;overflow:hidden;z-index:6"><div class=t style="left:2.45px;top:3.38px;transform:scaleX(1.0524);transform-origin:0 0;font-size:15.5px;line-height:20px;letter-spacing:0.404px;font-weight:normal;color:#111;z-index:6;-webkit-text-stroke:0px #111">python user_code/rgb_led_green.py</div></div><div class=t style="left:18.00px;top:641.88px;transform:scaleX(1.0260);transform-origin:0 0;font-size:15.5px;line-height:20px;letter-spacing:0.000px;font-weight:normal;color:#111;z-index:5;-webkit-text-stroke:0px #111">2</div><div class=t style="left:70.27px;top:641.88px;transform:scaleX(1.0260);transform-origin:0 0;font-size:15.5px;line-height:20px;letter-spacing:0.000px;font-weight:normal;color:#111;z-index:5;-webkit-text-stroke:0px #111">1</div><div class=t style="left:206.29px;top:641.88px;transform:scaleX(1.0103);transform-origin:0 0;font-size:15.5px;line-height:20px;letter-spacing:0.449px;font-weight:normal;color:#111;z-index:5;-webkit-text-stroke:0px #111">Rectangle</div><div class=t style="left:318.40px;top:641.88px;transform:scaleX(0.9998);transform-origin:0 0;font-size:15.5px;line-height:20px;letter-spacing:0.489px;font-weight:normal;color:#111;z-index:5;-webkit-text-stroke:0px #111">Black</div><div class=t style="left:404.10px;top:644.68px;transform:scaleX(1.1209);transform-origin:0 0;font-size:15.5px;line-height:20px;letter-spacing:0.950px;font-weight:normal;color:#111;z-index:5;-webkit-text-stroke:0px #111">&lt;&lt;</div><div class=t style="left:906.20px;top:641.88px;transform:scaleX(0.9879);transform-origin:0 0;font-size:15.5px;line-height:20px;letter-spacing:0.499px;font-weight:normal;color:#111;z-index:5;-webkit-text-stroke:0px #111">SRV_1-L-30</div><div class=t style="left:18.00px;top:687.88px;transform:scaleX(1.0260);transform-origin:0 0;font-size:15.5px;line-height:20px;letter-spacing:0.000px;font-weight:normal;color:#111;z-index:5;-webkit-text-stroke:0px #111">2</div><div class=t style="left:71.30px;top:687.88px;transform:scaleX(1.0260);transform-origin:0 0;font-size:15.5px;line-height:20px;letter-spacing:0.000px;font-weight:normal;color:#111;z-index:5;-webkit-text-stroke:0px #111">2</div><div class=t style="left:206.29px;top:687.88px;transform:scaleX(1.0103);transform-origin:0 0;font-size:15.5px;line-height:20px;letter-spacing:0.449px;font-weight:normal;color:#111;z-index:5;-webkit-text-stroke:0px #111">Rectangle</div><div class=t style="left:318.40px;top:687.88px;transform:scaleX(0.9998);transform-origin:0 0;font-size:15.5px;line-height:20px;letter-spacing:0.489px;font-weight:normal;color:#111;z-index:5;-webkit-text-stroke:0px #111">Black</div><div class=t style="left:404.10px;top:690.68px;transform:scaleX(1.0260);transform-origin:0 0;font-size:15.5px;line-height:20px;letter-spacing:0.000px;font-weight:normal;color:#111;z-index:5;-webkit-text-stroke:0px #111">&lt;</div><div class=t style="left:906.20px;top:687.88px;transform:scaleX(0.9996);transform-origin:0 0;font-size:15.5px;line-height:20px;letter-spacing:0.494px;font-weight:normal;color:#111;z-index:5;-webkit-text-stroke:0px #111">SRV_1-L-05</div><div class=t style="left:18.00px;top:732.88px;transform:scaleX(1.0260);transform-origin:0 0;font-size:15.5px;line-height:20px;letter-spacing:0.000px;font-weight:normal;color:#111;z-index:5;-webkit-text-stroke:0px #111">2</div><div class=t style="left:71.30px;top:732.88px;transform:scaleX(1.0260);transform-origin:0 0;font-size:15.5px;line-height:20px;letter-spacing:0.000px;font-weight:normal;color:#111;z-index:5;-webkit-text-stroke:0px #111">3</div><div class=t style="left:206.29px;top:732.88px;transform:scaleX(1.0103);transform-origin:0 0;font-size:15.5px;line-height:20px;letter-spacing:0.449px;font-weight:normal;color:#111;z-index:5;-webkit-text-stroke:0px #111">Rectangle</div><div class=t style="left:318.40px;top:732.88px;transform:scaleX(0.9998);transform-origin:0 0;font-size:15.5px;line-height:20px;letter-spacing:0.489px;font-weight:normal;color:#111;z-index:5;-webkit-text-stroke:0px #111">Black</div><div class=t style="left:403.00px;top:735.68px;transform:scaleX(1.0260);transform-origin:0 0;font-size:15.5px;line-height:20px;letter-spacing:0.000px;font-weight:normal;color:#111;z-index:5;-webkit-text-stroke:0px #111">X</div><div class=t style="left:906.20px;top:732.88px;transform:scaleX(0.9938);transform-origin:0 0;font-size:15.5px;line-height:20px;letter-spacing:0.541px;font-weight:normal;color:#111;z-index:5;-webkit-text-stroke:0px #111">SRV_1-MID</div><div class=t style="left:18.00px;top:778.88px;transform:scaleX(1.0260);transform-origin:0 0;font-size:15.5px;line-height:20px;letter-spacing:0.000px;font-weight:normal;color:#111;z-index:5;-webkit-text-stroke:0px #111">2</div><div class=t style="left:71.30px;top:778.88px;transform:scaleX(1.0260);transform-origin:0 0;font-size:15.5px;line-height:20px;letter-spacing:0.000px;font-weight:normal;color:#111;z-index:5;-webkit-text-stroke:0px #111">4</div><div class=t style="left:206.29px;top:778.88px;transform:scaleX(1.0103);transform-origin:0 0;font-size:15.5px;line-height:20px;letter-spacing:0.449px;font-weight:normal;color:#111;z-index:5;-webkit-text-stroke:0px #111">Rectangle</div><div class=t style="left:318.40px;top:778.88px;transform:scaleX(0.9998);transform-origin:0 0;font-size:15.5px;line-height:20px;letter-spacing:0.489px;font-weight:normal;color:#111;z-index:5;-webkit-text-stroke:0px #111">Black</div><div class=t style="left:404.10px;top:781.68px;transform:scaleX(1.0260);transform-origin:0 0;font-size:15.5px;line-height:20px;letter-spacing:0.000px;font-weight:normal;color:#111;z-index:5;-webkit-text-stroke:0px #111">&gt;</div><div class=t style="left:906.20px;top:778.88px;transform:scaleX(0.9700);transform-origin:0 0;font-size:15.5px;line-height:20px;letter-spacing:0.509px;font-weight:normal;color:#111;z-index:5;-webkit-text-stroke:0px #111">SRV_1-R-05</div><div class=t style="left:18.00px;top:823.88px;transform:scaleX(1.0260);transform-origin:0 0;font-size:15.5px;line-height:20px;letter-spacing:0.000px;font-weight:normal;color:#111;z-index:5;-webkit-text-stroke:0px #111">2</div><div class=t style="left:71.30px;top:823.88px;transform:scaleX(1.0260);transform-origin:0 0;font-size:15.5px;line-height:20px;letter-spacing:0.000px;font-weight:normal;color:#111;z-index:5;-webkit-text-stroke:0px #111">5</div><div class=t style="left:206.29px;top:823.88px;transform:scaleX(1.0103);transform-origin:0 0;font-size:15.5px;line-height:20px;letter-spacing:0.449px;font-weight:normal;color:#111;z-index:5;-webkit-text-stroke:0px #111">Rectangle</div><div class=t style="left:318.40px;top:823.88px;transform:scaleX(0.9998);transform-origin:0 0;font-size:15.5px;line-height:20px;letter-spacing:0.489px;font-weight:normal;color:#111;z-index:5;-webkit-text-stroke:0px #111">Black</div><div class=t style="left:404.10px;top:826.68px;transform:scaleX(1.1209);transform-origin:0 0;font-size:15.5px;line-height:20px;letter-spacing:0.950px;font-weight:normal;color:#111;z-index:5;-webkit-text-stroke:0px #111">&gt;&gt;</div><div class=t style="left:906.20px;top:823.88px;transform:scaleX(0.9590);transform-origin:0 0;font-size:15.5px;line-height:20px;letter-spacing:0.514px;font-weight:normal;color:#111;z-index:5;-webkit-text-stroke:0px #111">SRV_1-R-30</div><div class=t style="left:18.00px;top:869.88px;transform:scaleX(1.0260);transform-origin:0 0;font-size:15.5px;line-height:20px;letter-spacing:0.000px;font-weight:normal;color:#111;z-index:5;-webkit-text-stroke:0px #111">3</div><div class=t style="left:70.27px;top:869.88px;transform:scaleX(1.0260);transform-origin:0 0;font-size:15.5px;line-height:20px;letter-spacing:0.000px;font-weight:normal;color:#111;z-index:5;-webkit-text-stroke:0px #111">1</div><div class=t style="left:206.29px;top:869.88px;transform:scaleX(1.0103);transform-origin:0 0;font-size:15.5px;line-height:20px;letter-spacing:0.449px;font-weight:normal;color:#111;z-index:5;-webkit-text-stroke:0px #111">Rectangle</div><div class=t style="left:318.40px;top:869.88px;transform:scaleX(0.9998);transform-origin:0 0;font-size:15.5px;line-height:20px;letter-spacing:0.489px;font-weight:normal;color:#111;z-index:5;-webkit-text-stroke:0px #111">Black</div><div class=t style="left:18.00px;top:914.88px;transform:scaleX(1.0260);transform-origin:0 0;font-size:15.5px;line-height:20px;letter-spacing:0.000px;font-weight:normal;color:#111;z-index:5;-webkit-text-stroke:0px #111">3</div><div class=t style="left:71.30px;top:914.88px;transform:scaleX(1.0260);transform-origin:0 0;font-size:15.5px;line-height:20px;letter-spacing:0.000px;font-weight:normal;color:#111;z-index:5;-webkit-text-stroke:0px #111">2</div><div class=t style="left:206.29px;top:914.88px;transform:scaleX(1.0103);transform-origin:0 0;font-size:15.5px;line-height:20px;letter-spacing:0.449px;font-weight:normal;color:#111;z-index:5;-webkit-text-stroke:0px #111">Rectangle</div><div class=t style="left:318.40px;top:914.88px;transform:scaleX(0.9998);transform-origin:0 0;font-size:15.5px;line-height:20px;letter-spacing:0.489px;font-weight:normal;color:#111;z-index:5;-webkit-text-stroke:0px #111">Black</div><div class=t style="left:18.00px;top:960.88px;transform:scaleX(1.0260);transform-origin:0 0;font-size:15.5px;line-height:20px;letter-spacing:0.000px;font-weight:normal;color:#111;z-index:5;-webkit-text-stroke:0px #111">3</div><div class=t style="left:71.30px;top:960.88px;transform:scaleX(1.0260);transform-origin:0 0;font-size:15.5px;line-height:20px;letter-spacing:0.000px;font-weight:normal;color:#111;z-index:5;-webkit-text-stroke:0px #111">3</div><div class=t style="left:206.29px;top:960.88px;transform:scaleX(1.0103);transform-origin:0 0;font-size:15.5px;line-height:20px;letter-spacing:0.449px;font-weight:normal;color:#111;z-index:5;-webkit-text-stroke:0px #111">Rectangle</div><div class=t style="left:318.40px;top:960.88px;transform:scaleX(0.9998);transform-origin:0 0;font-size:15.5px;line-height:20px;letter-spacing:0.489px;font-weight:normal;color:#111;z-index:5;-webkit-text-stroke:0px #111">Black</div><div class=t style="left:18.00px;top:1005.88px;transform:scaleX(1.0260);transform-origin:0 0;font-size:15.5px;line-height:20px;letter-spacing:0.000px;font-weight:normal;color:#111;z-index:5;-webkit-text-stroke:0px #111">3</div><div class=t style="left:71.30px;top:1005.88px;transform:scaleX(1.0260);transform-origin:0 0;font-size:15.5px;line-height:20px;letter-spacing:0.000px;font-weight:normal;color:#111;z-index:5;-webkit-text-stroke:0px #111">4</div><div class=t style="left:206.29px;top:1005.88px;transform:scaleX(1.0103);transform-origin:0 0;font-size:15.5px;line-height:20px;letter-spacing:0.449px;font-weight:normal;color:#111;z-index:5;-webkit-text-stroke:0px #111">Rectangle</div><div class=t style="left:318.40px;top:1005.88px;transform:scaleX(0.9998);transform-origin:0 0;font-size:15.5px;line-height:20px;letter-spacing:0.489px;font-weight:normal;color:#111;z-index:5;-webkit-text-stroke:0px #111">Black</div><div class=t style="left:18.00px;top:1051.88px;transform:scaleX(1.0260);transform-origin:0 0;font-size:15.5px;line-height:20px;letter-spacing:0.000px;font-weight:normal;color:#111;z-index:5;-webkit-text-stroke:0px #111">3</div><div class=t style="left:71.30px;top:1051.88px;transform:scaleX(1.0260);transform-origin:0 0;font-size:15.5px;line-height:20px;letter-spacing:0.000px;font-weight:normal;color:#111;z-index:5;-webkit-text-stroke:0px #111">5</div><div class=t style="left:206.29px;top:1051.88px;transform:scaleX(1.0103);transform-origin:0 0;font-size:15.5px;line-height:20px;letter-spacing:0.449px;font-weight:normal;color:#111;z-index:5;-webkit-text-stroke:0px #111">Rectangle</div><div class=t style="left:318.40px;top:1051.88px;transform:scaleX(0.9998);transform-origin:0 0;font-size:15.5px;line-height:20px;letter-spacing:0.489px;font-weight:normal;color:#111;z-index:5;-webkit-text-stroke:0px #111">Black</div>
<div class=t style="left:16.40px;top:1110.91px;font-size:16px;line-height:21px;letter-spacing:0.630px;color:#fff;z-index:5">Submit</div>
</body></html>
